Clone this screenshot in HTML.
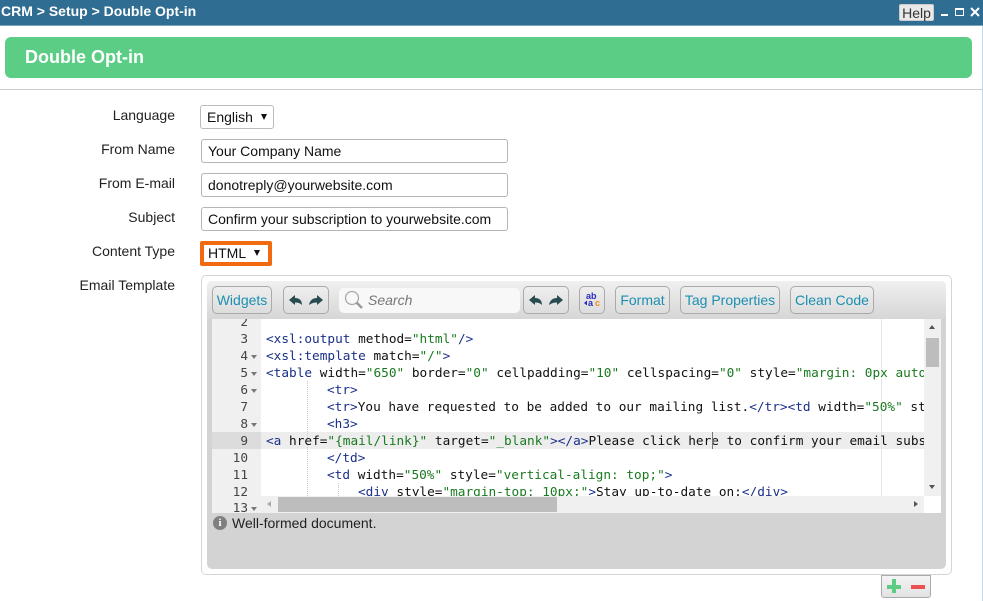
<!DOCTYPE html>
<html><head><meta charset="utf-8"><style>
html,body{margin:0;padding:0;background:#fff}
body{width:983px;height:601px;position:relative;overflow:hidden;font-family:"Liberation Sans",sans-serif;font-size:14px;color:#222}
div,span{position:absolute;box-sizing:border-box;white-space:pre}
.lb{right:808px;text-align:right;color:#222;font-size:14px;line-height:16px}
.in{left:201px;width:307px;height:24px;border:1px solid #b5b5b5;border-radius:3px;padding-left:6px;line-height:23px;color:#111;background:#fff;font-size:14px}
.btn{top:286px;height:28px;border:1px solid #aaa;border-radius:5px;background:linear-gradient(#eee,#ddd);color:#1b8fb0;text-align:center;line-height:26px;font-size:14px}
.cl{left:266px;font:12.75px/17px "DejaVu Sans Mono",monospace;color:#111;height:17px}
.n{left:212px;width:36px;text-align:right;font:12.75px/17px "DejaVu Sans Mono",monospace;color:#444}
.t{color:#1a2f8a;position:static}.s{color:#1a7a20;position:static}.f{left:250px;width:0;height:0;border-left:3.5px solid transparent;border-right:3.5px solid transparent;border-top:4px solid #777}
.g{width:1px;background:repeating-linear-gradient(#ccc 0 1px,transparent 1px 2px)}
</style></head><body>
<div style="left:0;top:0;width:983px;height:26px;background:#2f6d92;border-bottom:1px solid #7fa3bb"></div>
<div style="left:1px;top:3px;color:#fff;font-weight:bold;font-size:14px;line-height:16px">CRM &gt; Setup &gt; Double Opt-in</div>
<div style="left:899px;top:4px;width:35px;height:17px;background:#e9e9e9;border:1px solid #ccc;border-radius:2px;color:#333;text-align:center;line-height:16px;font-size:14px">Help</div>
<div style="left:941px;top:14px;width:7px;height:2px;background:#fff"></div>
<div style="left:955px;top:8px;width:9px;height:8px;border:1px solid #fff;border-top-width:2px"></div>
<svg style="position:absolute;left:970px;top:7px" width="10" height="10"><path d="M1 1L9 9M9 1L1 9" stroke="#fff" stroke-width="2"/></svg>
<div style="left:982px;top:26px;width:1px;height:575px;background:#c5d8e6"></div>

<div style="left:5px;top:37px;width:967px;height:41px;background:#5bcd85;border-radius:6px"></div>
<div style="left:25px;top:46px;color:#fff;font-weight:bold;font-size:18px;line-height:22px">Double Opt-in</div>
<div style="left:0;top:89px;width:982px;height:1px;background:#ccc"></div>

<div class="lb" style="top:107px">Language</div>
<div class="lb" style="top:141px">From Name</div>
<div class="lb" style="top:175px">From E-mail</div>
<div class="lb" style="top:209px">Subject</div>
<div class="lb" style="top:243px">Content Type</div>
<div class="lb" style="top:277px">Email Template</div>

<div style="left:200px;top:105px;width:74px;height:24px;border:1px solid #bbb;border-radius:3px;padding-left:6px;line-height:23px;color:#111">English</div>
<div style="left:261px;top:114px;width:0;height:0;border-left:3.5px solid transparent;border-right:3.5px solid transparent;border-top:6px solid #111"></div>
<div class="in" style="top:139px">Your Company Name</div>
<div class="in" style="top:173px">donotreply@yourwebsite.com</div>
<div class="in" style="top:207px">Confirm your subscription to yourwebsite.com</div>
<div style="left:200px;top:241px;width:72px;height:25px;border:4px solid #f26a0f;border-radius:2px;padding-left:4px;line-height:17px;color:#111">HTML</div>
<div style="left:254px;top:250px;width:0;height:0;border-left:3.5px solid transparent;border-right:3.5px solid transparent;border-top:6px solid #111"></div>

<div style="left:201px;top:275px;width:751px;height:300px;border:1px solid #d5d5d5;border-radius:5px"></div>
<div style="left:207px;top:281px;width:739px;height:288px;background:#d3d3d3;border-radius:5px"></div>
<div style="left:207px;top:281px;width:739px;height:38px;background:linear-gradient(#f0f0f0,#d6d6d6);border-radius:5px 5px 0 0"></div>

<div class="btn" style="left:212px;width:60px">Widgets</div>
<div class="btn" style="left:283px;width:46px"></div>
<svg style="position:absolute;left:288px;top:294px" width="36" height="13"><path d="M1 6L7 1V4C11 4 14 6 14 11C12 9 10 8.500 7 8.500V11Z" fill="#274b4f"/><path d="M35 6L29 1V4C25 4 22 6 21 11C24 9 26 8.500 29 8.500V11Z" fill="#274b4f"/></svg>
<div style="left:339px;top:288px;width:181px;height:25px;background:#f8f8f8;border-radius:5px"></div>
<svg style="position:absolute;left:344px;top:290px" width="20" height="20"><circle cx="8" cy="8" r="6.500" fill="none" stroke="#aaa" stroke-width="1.300"/><path d="M12.500 12.500L18 18" stroke="#999" stroke-width="2.500"/></svg>
<div style="left:368px;top:292px;font-style:italic;color:#777;font-size:14px;line-height:16px">Search</div>
<div class="btn" style="left:523px;width:46px"></div>
<svg style="position:absolute;left:528px;top:294px" width="36" height="13"><path d="M1 6L7 1V4C11 4 14 6 14 11C12 9 10 8.500 7 8.500V11Z" fill="#274b4f"/><path d="M35 6L29 1V4C25 4 22 6 21 11C24 9 26 8.500 29 8.500V11Z" fill="#274b4f"/></svg>
<div class="btn" style="left:579px;width:26px"></div>
<svg style="position:absolute;left:584px;top:292px" width="17" height="16"><text x="2" y="7" font-family="Liberation Sans" font-size="9" font-weight="bold" fill="#2a2ac0">ab</text><text x="4" y="14" font-family="Liberation Sans" font-size="9" font-weight="bold" fill="#2a2ac0">a</text><path d="M0 11L3 8.500V13.500Z" fill="#2a2ac0"/><text x="11" y="14" font-family="Liberation Sans" font-size="9" font-weight="bold" fill="#f08a10">c</text></svg>
<div class="btn" style="left:615px;width:55px">Format</div>
<div class="btn" style="left:680px;width:100px">Tag Properties</div>
<div class="btn" style="left:790px;width:84px">Clean Code</div>

<div id="ed" style="left:212px;top:319px;width:729px;height:194px;background:#fff;overflow:hidden">
<div style="left:0;top:0;width:49px;height:194px;background:#f0f0f0"></div>
<div style="left:0;top:113px;width:49px;height:17px;background:#dcdcdc"></div>
<div style="left:49px;top:113px;width:663px;height:17px;background:#ededed"></div>
<div style="left:669px;top:0;width:1px;height:177px;background:#e6e6e6"></div>
<div class="g" style="left:95px;top:62px;height:115px"></div>
<div class="g" style="left:126px;top:164px;height:13px"></div>
</div>
<div style="left:212px;top:319px;width:729px;height:177px;overflow:hidden">
<div class="n" style="left:0;top:-5px">2</div>
<div class="n" style="left:0;top:12px">3</div>
<div class="n" style="left:0;top:29px">4</div>
<div class="n" style="left:0;top:46px">5</div>
<div class="n" style="left:0;top:63px">6</div>
<div class="n" style="left:0;top:80px">7</div>
<div class="n" style="left:0;top:97px">8</div>
<div class="n" style="left:0;top:114px">9</div>
<div class="n" style="left:0;top:131px">10</div>
<div class="n" style="left:0;top:148px">11</div>
<div class="n" style="left:0;top:165px">12</div>
<div class="f" style="left:39px;top:36px"></div>
<div class="f" style="left:39px;top:53px"></div>
<div class="f" style="left:39px;top:70px"></div>
<div class="f" style="left:39px;top:104px"></div>
</div>
<div style="left:261px;top:319px;width:663px;height:177px;overflow:hidden">
<div class="cl" style="left:5px;top:12px"><span class="t">&lt;xsl:output</span> method=<span class="s">"html"</span><span class="t">/&gt;</span></div>
<div class="cl" style="left:5px;top:29px"><span class="t">&lt;xsl:template</span> match=<span class="s">"/"</span><span class="t">&gt;</span></div>
<div class="cl" style="left:5px;top:46px"><span class="t">&lt;table</span> width=<span class="s">"650"</span> border=<span class="s">"0"</span> cellpadding=<span class="s">"10"</span> cellspacing=<span class="s">"0"</span> style=<span class="s">"margin: 0px auto</span></div>
<div class="cl" style="left:66px;top:63px"><span class="t">&lt;tr&gt;</span></div>
<div class="cl" style="left:66px;top:80px"><span class="t">&lt;tr&gt;</span>You have requested to be added to our mailing list.<span class="t">&lt;/tr&gt;&lt;td</span> width=<span class="s">"50%"</span> st</div>
<div class="cl" style="left:66px;top:97px"><span class="t">&lt;h3&gt;</span></div>
<div class="cl" style="left:5px;top:114px"><span class="t">&lt;a</span> href=<span class="s">"{mail/link}"</span> target=<span class="s">"_blank"</span><span class="t">&gt;&lt;/a&gt;</span>Please click here to confirm your email subs</div>
<div class="cl" style="left:66px;top:131px"><span class="t">&lt;/td&gt;</span></div>
<div class="cl" style="left:66px;top:148px"><span class="t">&lt;td</span> width=<span class="s">"50%"</span> style=<span class="s">"vertical-align: top;"</span><span class="t">&gt;</span></div>
<div class="cl" style="left:97px;top:165px"><span class="t">&lt;div</span> style=<span class="s">"margin-top: 10px;"</span><span class="t">&gt;</span>Stay up-to-date on:<span class="t">&lt;/div&gt;</span></div>
<div style="left:451px;top:113px;width:1px;height:17px;background:#777"></div>
</div>
<div style="left:212px;top:496px;width:49px;height:17px;background:#f0f0f0;overflow:hidden"><div class="n" style="left:0;top:4px">13</div><div class="f" style="left:39px;top:11px"></div></div>
<div style="left:261px;top:496px;width:663px;height:17px;background:#f0f0f0"></div>
<div style="left:278px;top:497px;width:279px;height:15px;background:#bdbdbd"></div>
<div style="left:267px;top:501px;width:0;height:0;border-top:3.5px solid transparent;border-bottom:3.5px solid transparent;border-right:4px solid #aaa"></div>
<div style="left:914px;top:501px;width:0;height:0;border-top:3.5px solid transparent;border-bottom:3.5px solid transparent;border-left:4px solid #555"></div>
<div style="left:924px;top:319px;width:17px;height:177px;background:#f0f0f0"></div>
<div style="left:926px;top:338px;width:13px;height:29px;background:#bdbdbd"></div>
<div style="left:929px;top:325px;width:0;height:0;border-left:3.5px solid transparent;border-right:3.5px solid transparent;border-bottom:4px solid #555"></div>
<div style="left:929px;top:485px;width:0;height:0;border-left:3.5px solid transparent;border-right:3.5px solid transparent;border-top:4px solid #555"></div>

<div style="left:213px;top:516px;width:14px;height:14px;border-radius:50%;background:#808080;color:#fff;font:bold 11px/14px 'Liberation Serif',serif;text-align:center">i</div>
<div style="left:232px;top:515px;color:#222;font-size:14px;line-height:16px">Well-formed document.</div>

<div style="left:881px;top:575px;width:50px;height:23px;border:1px solid #aaa;border-radius:0 0 3px 3px;background:linear-gradient(#f4f4f4,#e2e2e2)"></div>
<div style="left:887px;top:585px;width:14px;height:4px;background:#5bcd85"></div>
<div style="left:892px;top:579px;width:4px;height:14px;background:#5bcd85"></div>
<div style="left:911px;top:585px;width:14px;height:4px;background:#ec5050"></div>
</body></html>
